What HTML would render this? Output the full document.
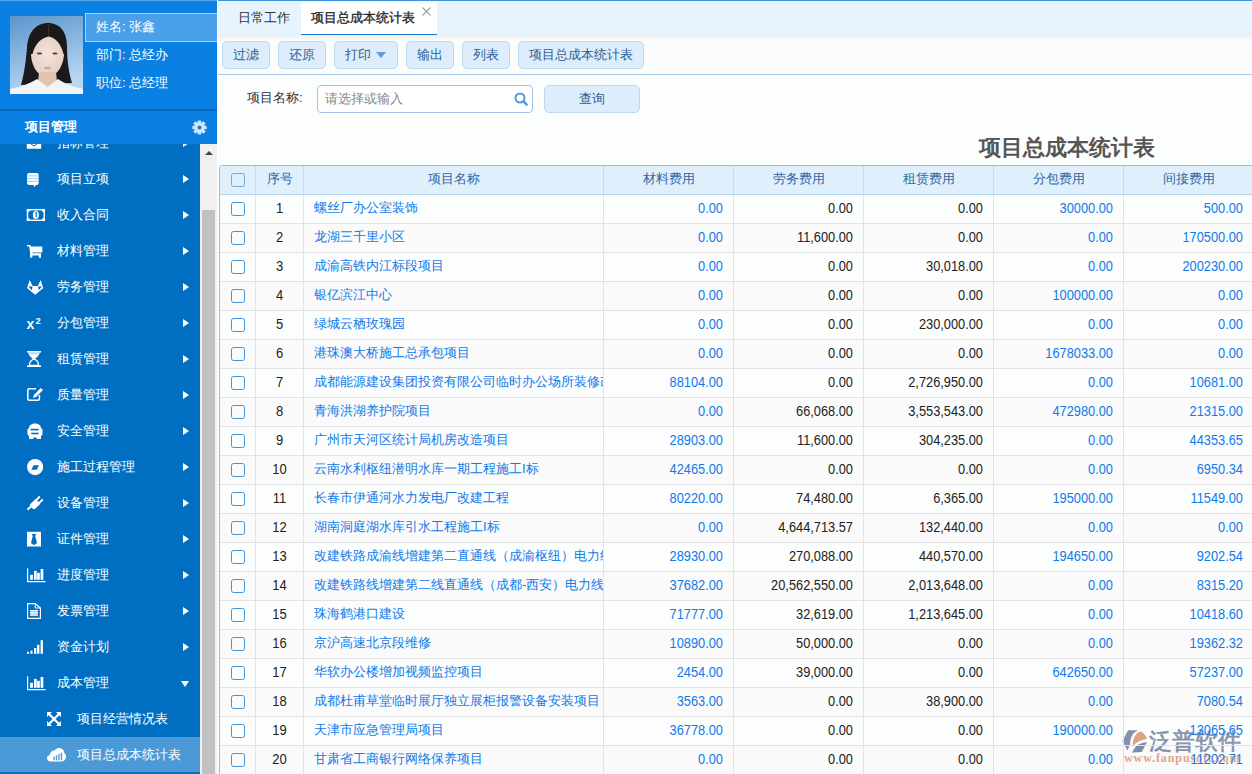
<!DOCTYPE html><html><head><meta charset="utf-8"><style>
*{margin:0;padding:0;box-sizing:border-box}
html,body{width:1252px;height:774px;overflow:hidden;background:#fcfdfd;font-family:"Liberation Sans",sans-serif;font-size:13px;position:relative}
.abs{position:absolute}
#side{position:absolute;left:0;top:0;width:217px;height:774px;background:#006fc2;overflow:hidden}
#shead{position:absolute;left:0;top:0;width:217px;height:110px;background:#0a80e3;border-top:1px solid #55a6ea}
#photo{position:absolute;left:10px;top:16px;width:73px;height:78px}
.info{position:absolute;left:96px;color:#fff;font-size:13px;line-height:20px}
#namebox{position:absolute;left:85px;top:13px;width:134px;height:29px;background:#4aa0e8;border:1px solid #a9d1f5;border-right:none}
#pbar{position:absolute;left:0;top:109px;width:217px;height:35px;background:#0a80e3;border-top:2px solid #0868bb}
#pbar span{position:absolute;left:25px;top:7px;color:#fff;font-weight:bold;font-size:13px}
.mi{position:absolute;left:0;width:200px;height:36px;color:#fff;font-size:13px}
.mi svg{position:absolute;left:25px;top:8px;overflow:visible}
.mi .t{position:absolute;left:57px;top:9.5px;line-height:18px}
.mi .ar{position:absolute;left:183px;top:14.6px;width:0;height:0;border-top:4.5px solid transparent;border-bottom:4.5px solid transparent;border-left:6px solid #fff}
#strack{position:absolute;left:200px;top:144px;width:17px;height:630px;background:#f0f0f0}
#sthumb{position:absolute;left:202px;top:210px;width:13px;height:564px;background:#c1c1c1}
#main{position:absolute;left:217px;top:0;width:1035px;height:774px;background:#fcfdfd;border-left:1px solid #fff}
#tabs{position:absolute;left:218px;top:0;width:1034px;height:35px;background:#e8f4fd;border-top:1px solid #3d94e0}
.tab{position:absolute;top:1px;height:34px;line-height:32px;font-size:13px;color:#333}
#toolbar{position:absolute;left:218px;top:35px;width:1034px;height:40px;background:linear-gradient(#eeeeee 0,#fbfcfc 6px);border-bottom:1px solid #a8cbe8}
.btn{position:absolute;top:41px;height:28px;background:#deedfb;border:1px solid #bfd8ef;border-radius:5px;color:#2d5e92;font-size:13px;text-align:center;line-height:26px}
</style></head><body>

<div id="side">
<div id="shead"></div>
<svg id="photo" width="73" height="78" viewBox="0 0 73 78"><defs><linearGradient id="pg" x1="0" y1="0" x2="0.3" y2="1"><stop offset="0" stop-color="#5a95cc"/><stop offset="1" stop-color="#b8d8f2"/></linearGradient><radialGradient id="fg" cx="0.5" cy="0.45" r="0.6"><stop offset="0" stop-color="#f4e4dc"/><stop offset="1" stop-color="#e6cbbd"/></radialGradient></defs><rect width="73" height="78" fill="url(#pg)"/><path d="M11 69C15 55 16 42 17 32C18 16 26 7 38 7C50 7 57 16 57 30C57 45 59 57 62 67Z" fill="#1b1a1a"/><path d="M21 37C21 27 28 20 38.5 20C48 20 54 27 54 37C54 50 46 61 37.5 61C28 61 21 50 21 37Z" fill="url(#fg)"/><path d="M38.5 12L38.8 20.5C31 22 25 28 22.5 38L20 38C20 25 28 14 38.5 12Z" fill="#1b1a1a"/><path d="M38.5 12L38.8 20.5C46 22 51 28 53.5 38L56 38C56 25 49 14 38.5 12Z" fill="#1b1a1a"/><path d="M38.3 8L38.8 20" stroke="#4a3e38" stroke-width="0.7"/><path d="M29 56L46 56L47 66L37.5 72L28 66Z" fill="#e2c3b4"/><ellipse cx="29.5" cy="37.5" rx="2.6" ry="1.1" fill="#4a3c3c"/><ellipse cx="45" cy="37.5" rx="2.6" ry="1.1" fill="#4a3c3c"/><ellipse cx="37.5" cy="52" rx="3.4" ry="1.3" fill="#dc9aa0"/><path d="M0 78L0 73C8 71 18 69 27 63L37.5 71L48 63C56 69 66 71 73 73L73 78Z" fill="#f2f4f7"/></svg>
<div id="namebox"></div>
<div class="info" style="top:17px">姓名: 张鑫</div>
<div class="info" style="top:45px">部门: 总经办</div>
<div class="info" style="top:73px">职位: 总经理</div>
<div class="mi" style="top:124px"><svg width="21" height="20" viewBox="0 0 21 20"><rect x="1.8" y="3" width="14.4" height="13.8" rx="0.5" fill="#fff"/><path d="M6 12L9 14L12 12" stroke="#006fc2" stroke-width="1" fill="none"/></svg><span class="t">指标管理</span><div class="ar"></div></div>
<div class="mi" style="top:160px"><svg width="21" height="20" viewBox="0 0 21 20"><rect x="2" y="5" width="11.7" height="12" rx="2" fill="#fff"/><path d="M2 7.9h11.7M2 10.6h11.7M2 13.3h11.7" stroke="#006fc2" stroke-opacity="0.45" stroke-width="0.8"/><path d="M8.4 16.5L11.5 16.5L9.2 19.3Z" fill="#fff"/></svg><span class="t">项目立项</span><div class="ar"></div></div>
<div class="mi" style="top:196px"><svg width="21" height="20" viewBox="0 0 21 20"><rect x="1.8" y="5" width="18.1" height="12" fill="#fff"/><rect x="3.2" y="6.4" width="15.3" height="9.2" fill="#006fc2"/><circle cx="3.2" cy="6.4" r="1.6" fill="#fff"/><circle cx="18.5" cy="6.4" r="1.6" fill="#fff"/><circle cx="3.2" cy="15.6" r="1.6" fill="#fff"/><circle cx="18.5" cy="15.6" r="1.6" fill="#fff"/><ellipse cx="10.85" cy="11" rx="3" ry="4.1" fill="#fff"/><path d="M10.2 9.2L11.2 8.6V13.4" stroke="#006fc2" stroke-width="1.1" fill="none"/></svg><span class="t">收入合同</span><div class="ar"></div></div>
<div class="mi" style="top:232px"><svg width="21" height="20" viewBox="0 0 21 20"><path d="M2 5L5.3 5L6 6.5L17.3 6.5L17.3 12.6L7.4 12.6L7.4 13.3L16 13.3L16 17.8L13.8 17.8L13.8 15.4L7.3 15.4L7.3 17.8L5.1 17.8L5.1 13L4.2 6.6L2 6.6Z" fill="#fff"/></svg><span class="t">材料管理</span><div class="ar"></div></div>
<div class="mi" style="top:268px"><svg width="21" height="20" viewBox="0 0 21 20"><path d="M2 12L4.75 3.9L7.6 10L12.9 10L15.6 3.9L18.3 12L10.2 18.7Z" fill="#fff"/><path d="M3.3 10.6L7.4 10.6L6.9 14.2Z" fill="#006fc2"/><path d="M13.1 10.6L17.1 10.6L13.6 14.2Z" fill="#006fc2"/></svg><span class="t">劳务管理</span><div class="ar"></div></div>
<div class="mi" style="top:304px"><svg width="21" height="20" viewBox="0 0 21 20"><text x="1.6" y="17" font-family="Liberation Sans" font-weight="bold" font-size="14" fill="#fff">x</text><text x="10.6" y="11.5" font-family="Liberation Sans" font-weight="bold" font-size="9.5" fill="#fff">2</text></svg><span class="t">分包管理</span><div class="ar"></div></div>
<div class="mi" style="top:340px"><svg width="21" height="20" viewBox="0 0 21 20"><rect x="2" y="3" width="14" height="1.6" fill="#fff"/><rect x="2" y="17.4" width="14" height="1.6" fill="#fff"/><path d="M3.5 4.6L14.5 4.6C14.5 8 11 10 10 11L8 11C7 10 3.5 8 3.5 4.6Z" fill="#fff"/><path d="M5 5.8H13" stroke="#006fc2" stroke-opacity="0.4" stroke-width="0.9"/><path d="M9 11.2C6.5 12 4.4 14.2 4.4 17.4L13.6 17.4C13.6 14.2 11.5 12 9 11.2Z" stroke="#fff" stroke-width="1.3" fill="none"/></svg><span class="t">租赁管理</span><div class="ar"></div></div>
<div class="mi" style="top:376px"><svg width="21" height="20" viewBox="0 0 21 20"><path d="M11 4.8H4Q2.8 4.8 2.8 6V15Q2.8 16.2 4 16.2H13Q14.4 16.2 14.4 15V11" stroke="#fff" stroke-width="1.5" fill="none"/><path d="M8.2 13.9L8.8 10.9L15.8 3.9L18 6.1L11 13.1Z" fill="#fff"/></svg><span class="t">质量管理</span><div class="ar"></div></div>
<div class="mi" style="top:412px"><svg width="21" height="20" viewBox="0 0 21 20"><path d="M4 8C4 5 7 3.4 10 3.4C13 3.4 16 5 16 8C17.5 9 18 10.5 17.4 12C18 13.5 17.5 15 16 16L16 19L12.2 19L11.2 17.4L8.8 17.4L7.8 19L4 19L4 16C2.5 15 2 13.5 2.6 12C2 10.5 2.5 9 4 8Z" fill="#fff"/><rect x="5.5" y="8.8" width="8.2" height="1.6" fill="#006fc2"/><rect x="6.3" y="12.7" width="7.4" height="1.6" fill="#006fc2"/></svg><span class="t">安全管理</span><div class="ar"></div></div>
<div class="mi" style="top:448px"><svg width="21" height="20" viewBox="0 0 21 20"><circle cx="10.1" cy="11.1" r="8.1" fill="#fff"/><path d="M6.3 13.8L8.6 9.2L14 9.2L11.7 13.8Z" fill="#006fc2"/></svg><span class="t">施工过程管理</span><div class="ar"></div></div>
<div class="mi" style="top:484px"><svg width="21" height="20" viewBox="0 0 21 20"><path d="M2.5 17.8L7 13.3" stroke="#fff" stroke-width="2"/><path d="M5.2 12.3L10.5 7L15.3 11.8L10 17.1C8 17.6 4.7 15 5.2 12.3Z" fill="#fff"/><path d="M10.5 9L14.8 4.5M13.3 11.8L17.8 7.5" stroke="#fff" stroke-width="2"/></svg><span class="t">设备管理</span><div class="ar"></div></div>
<div class="mi" style="top:520px"><svg width="21" height="20" viewBox="0 0 21 20"><rect x="2" y="3.8" width="14" height="14.7" fill="#fff"/><path d="M6.7 6L11.3 6L10.2 8L12 15L9 17.2L6 15L7.8 8Z" fill="#006fc2"/></svg><span class="t">证件管理</span><div class="ar"></div></div>
<div class="mi" style="top:556px"><svg width="21" height="20" viewBox="0 0 21 20"><path d="M2.6 4.2V17.6H20.6" fill="none" stroke="#fff" stroke-width="1.2"/><rect x="5.1" y="10.8" width="2.8" height="5" fill="#fff"/><rect x="9" y="6.9" width="2.7" height="8.9" fill="#fff"/><rect x="12.1" y="8.8" width="2.7" height="7" fill="#fff"/><rect x="15.6" y="5" width="2.7" height="10.8" fill="#fff"/></svg><span class="t">进度管理</span><div class="ar"></div></div>
<div class="mi" style="top:592px"><svg width="21" height="20" viewBox="0 0 21 20"><path d="M2.6 3.6H10.2L15.4 8V18.3H2.6Z" fill="none" stroke="#fff" stroke-width="1.2"/><path d="M10.2 3.6V8H15.4" fill="none" stroke="#fff" stroke-width="1"/><rect x="5.1" y="10" width="7.8" height="5.8" fill="#fff"/><path d="M5.1 11.7H12.9M5.1 14H12.9" stroke="#006fc2" stroke-opacity="0.5" stroke-width="0.9"/></svg><span class="t">发票管理</span><div class="ar"></div></div>
<div class="mi" style="top:628px"><svg width="21" height="20" viewBox="0 0 21 20"><rect x="2" y="15.8" width="2" height="2" fill="#fff"/><rect x="5.5" y="14.7" width="2" height="3.1" fill="#fff"/><rect x="9" y="12" width="2.3" height="5.8" fill="#fff"/><rect x="12.1" y="8.8" width="2.3" height="9" fill="#fff"/><rect x="15.6" y="4.2" width="2.3" height="13.6" fill="#fff"/></svg><span class="t">资金计划</span><div class="ar"></div></div>
<div class="mi" style="top:664px"><svg width="21" height="20" viewBox="0 0 21 20"><path d="M2.6 4.2V17.6H20.6" fill="none" stroke="#fff" stroke-width="1.2"/><rect x="5.1" y="10.8" width="2.8" height="5" fill="#fff"/><rect x="9" y="6.9" width="2.7" height="8.9" fill="#fff"/><rect x="12.1" y="8.8" width="2.7" height="7" fill="#fff"/><rect x="15.6" y="5" width="2.7" height="10.8" fill="#fff"/></svg><span class="t">成本管理</span><div class="ar" style="left:181px;top:17px;border-left:4.5px solid transparent;border-right:4.5px solid transparent;border-top:6px solid #fff;border-bottom:none"></div></div>
<div class="mi" style="top:700px"><svg style="left:47px;top:12px" width="14" height="14" viewBox="0 0 14 14"><path d="M0 0h5L0 5zM14 0v5L9 0zM0 14V9l5 5zM14 14H9l5-5z" fill="#fff"/><path d="M2 2l10 10M12 2L2 12" stroke="#fff" stroke-width="2.2"/></svg><span class="t" style="left:77px;top:10px">项目经营情况表</span></div>
<div class="mi" style="top:737px;height:35px;background:#4b9ad7"><svg style="left:47px;top:11px" width="19" height="14" viewBox="0 0 19 14"><path d="M3.5 13.4C1.5 13.4 0 12 0 10.2C0 8.6 1.2 7.3 2.8 7C3 4.5 5 2.6 7.5 2.6C8.5 1 10.2 0 12 0C15 0 17.3 2.3 17.3 5.2C18.4 5.9 19 7 19 8.3V8.7C19 11.3 17 13.4 14.5 13.4Z" fill="#fff"/><rect x="6.3" y="8.5" width="1.4" height="3.8" fill="#4b9ad7"/><rect x="8.8" y="7.3" width="1.4" height="5" fill="#4b9ad7"/><rect x="11.3" y="6" width="1.4" height="6.3" fill="#4b9ad7"/><rect x="13.8" y="4.8" width="1.4" height="7.5" fill="#4b9ad7"/></svg><span class="t" style="left:77px;top:9px">项目总成本统计表</span></div>
<div id="pbar"><span>项目管理</span><svg style="position:absolute;left:192px;top:9px" width="15" height="15" viewBox="0 0 15 15"><path fill="#d3e6f8" d="M14.62 5.91 L14.62 9.09 L12.37 9.33 L12.24 9.65 L13.66 11.41 L11.41 13.66 L9.65 12.24 L9.33 12.37 L9.09 14.62 L5.91 14.62 L5.67 12.37 L5.35 12.24 L3.59 13.66 L1.34 11.41 L2.76 9.65 L2.63 9.33 L0.38 9.09 L0.38 5.91 L2.63 5.67 L2.76 5.35 L1.34 3.59 L3.59 1.34 L5.35 2.76 L5.67 2.63 L5.91 0.38 L9.09 0.38 L9.33 2.63 L9.65 2.76 L11.41 1.34 L13.66 3.59 L12.24 5.35 L12.37 5.67Z"/><circle cx="7.5" cy="7.5" r="4.2" fill="#d3e6f8"/><circle cx="7.5" cy="7.5" r="2" fill="#0a80e3"/></svg></div>
<div id="strack"></div><div id="sthumb"></div>
<div class="abs" style="left:205px;top:151px;width:0;height:0;border-left:4px solid transparent;border-right:4px solid transparent;border-bottom:4px solid #444"></div>
</div>
<div id="main"></div>
<div id="tabs"><div class="tab" style="left:20px">日常工作</div><div class="tab" style="left:83px;width:136px;background:#fff;border-bottom:2px solid #1a75c9;padding-left:10px;color:#2a2a2a;-webkit-text-stroke:0.35px #2a2a2a">项目总成本统计表</div><svg class="abs" style="left:204px;top:6px" width="9" height="9" viewBox="0 0 9 9"><path d="M0.5 0.5L8.5 8.5M8.5 0.5L0.5 8.5" stroke="#a0a0a0" stroke-width="1.1"/></svg></div>
<div id="toolbar"></div>
<div class="btn" style="left:222px;width:48px">过滤</div>
<div class="btn" style="left:278px;width:48px">还原</div>
<div class="btn" style="left:334px;width:64px;text-align:left;padding-left:10px">打印 <span style="display:inline-block;width:0;height:0;border-left:5px solid transparent;border-right:5px solid transparent;border-top:6px solid #5f9ed8;vertical-align:middle;margin-left:1px;position:relative;top:-1px"></span></div>
<div class="btn" style="left:406px;width:48px">输出</div>
<div class="btn" style="left:462px;width:48px">列表</div>
<div class="btn" style="left:518px;width:126px">项目总成本统计表</div>
<div class="abs" style="left:247px;top:89px;color:#333;font-size:13px;line-height:18px">项目名称:</div>
<div class="abs" style="left:317px;top:85px;width:216px;height:28px;background:#fff;border:1px solid #9fc4e6;border-radius:4px"><span style="position:absolute;left:7px;top:4px;color:#888;line-height:18px">请选择或输入</span><svg style="position:absolute;left:196px;top:6px" width="14" height="14" viewBox="0 0 14 14"><circle cx="6" cy="6" r="4.5" fill="none" stroke="#4c9be0" stroke-width="2"/><path d="M9.2 9.2l3.5 3.5" stroke="#4c9be0" stroke-width="2.4" stroke-linecap="round"/></svg></div>
<div class="btn" style="left:544px;top:85px;width:96px;height:28px;line-height:26px">查询</div>
<div class="abs" style="left:979px;top:135px;font-size:22px;font-weight:bold;color:#555;line-height:26px">项目总成本统计表</div>
<svg class="abs" style="left:1118px;top:724px" width="34" height="34" viewBox="0 0 34 34"><path d="M4.4 17.1L10.1 6.2L19.8 6.2C16 8 13.3 11.5 12.6 15.5L11.9 21L9.4 26.4Z" fill="#7f8ba8" fill-opacity="0.95"/><path d="M14.9 22C14.6 17 15.6 13 18.5 10C20 8.5 21.5 7.6 23.3 7.5C26 9.5 28 12 29 14.9C25 15.3 21 16.7 17.5 19.5Z" fill="#e0a184"/><path d="M14 28.6L17.6 22.8C19.5 20.6 22.5 19 29 18L23.7 28.1Z" fill="#7f8ba8"/></svg>
<div class="abs" style="left:1149px;top:725px;font-size:23px;line-height:32px;color:#8792ab;-webkit-text-stroke:0.6px #8792ab;white-space:nowrap">泛普软件</div>
<div class="abs" style="left:1124px;top:751px;font-family:Liberation Serif,serif;font-size:12px;font-weight:bold;letter-spacing:0.9px;line-height:14px;color:#e3a88a;white-space:nowrap">www.fanpusoft.com</div>
<div class="abs" style="left:219px;top:165px;width:1040px;height:620px;border:1px solid #8fbfe6;border-radius:3px 0 0 0;overflow:hidden">
<div class="abs" style="left:0;top:0;width:1040px;height:29px;background:#e0effc;border-bottom:1px solid #b7d4ee"></div>
<div class="abs" style="left:35px;top:0;width:1px;height:29px;background:#c3dcf2"></div>
<div class="abs" style="left:35.6px;top:-0.8px;width:48px;height:28px;line-height:28px;text-align:center;color:#2f68a3">序号</div>
<div class="abs" style="left:83px;top:0;width:1px;height:29px;background:#c3dcf2"></div>
<div class="abs" style="left:83.6px;top:-0.8px;width:300px;height:28px;line-height:28px;text-align:center;color:#2f68a3">项目名称</div>
<div class="abs" style="left:383px;top:0;width:1px;height:29px;background:#c3dcf2"></div>
<div class="abs" style="left:383.6px;top:-0.8px;width:130px;height:28px;line-height:28px;text-align:center;color:#2f68a3">材料费用</div>
<div class="abs" style="left:513px;top:0;width:1px;height:29px;background:#c3dcf2"></div>
<div class="abs" style="left:513.6px;top:-0.8px;width:130px;height:28px;line-height:28px;text-align:center;color:#2f68a3">劳务费用</div>
<div class="abs" style="left:643px;top:0;width:1px;height:29px;background:#c3dcf2"></div>
<div class="abs" style="left:643.6px;top:-0.8px;width:130px;height:28px;line-height:28px;text-align:center;color:#2f68a3">租赁费用</div>
<div class="abs" style="left:773px;top:0;width:1px;height:29px;background:#c3dcf2"></div>
<div class="abs" style="left:773.6px;top:-0.8px;width:130px;height:28px;line-height:28px;text-align:center;color:#2f68a3">分包费用</div>
<div class="abs" style="left:903px;top:0;width:1px;height:29px;background:#c3dcf2"></div>
<div class="abs" style="left:903.6px;top:-0.8px;width:131px;height:28px;line-height:28px;text-align:center;color:#2f68a3">间接费用</div>
<div class="abs" style="left:11px;top:7px;width:14px;height:14px;border:1.5px solid #70a9d7;border-radius:2.5px"></div>
<div class="abs" style="left:0;top:57px;width:1040px;height:1px;background:#e3e3e3"></div>
<div class="abs" style="left:11px;top:36px;width:14px;height:14px;border:1.5px solid #3f94dc;border-radius:2.5px"></div>
<div class="abs" style="left:35.6px;top:29px;width:48px;height:28px;line-height:28px;text-align:center;color:#222;transform:scaleY(1.08)">1</div>
<div class="abs" style="left:94px;top:28.4px;width:290px;height:28px;line-height:28px;white-space:nowrap;overflow:hidden;color:#0f7aea">螺丝厂办公室装饰</div>
<div class="abs" style="left:382.6px;top:29px;width:120px;height:28px;line-height:28px;text-align:right;color:#0f7aea;transform:scale(0.985,1.08);transform-origin:119.5px 50%">0.00</div>
<div class="abs" style="left:512.6px;top:29px;width:120px;height:28px;line-height:28px;text-align:right;color:#222;transform:scale(0.985,1.08);transform-origin:119.5px 50%">0.00</div>
<div class="abs" style="left:642.6px;top:29px;width:120px;height:28px;line-height:28px;text-align:right;color:#222;transform:scale(0.985,1.08);transform-origin:119.5px 50%">0.00</div>
<div class="abs" style="left:772.6px;top:29px;width:120px;height:28px;line-height:28px;text-align:right;color:#0f7aea;transform:scale(0.985,1.08);transform-origin:119.5px 50%">30000.00</div>
<div class="abs" style="left:902.6px;top:29px;width:120px;height:28px;line-height:28px;text-align:right;color:#0f7aea;transform:scale(0.985,1.08);transform-origin:119.5px 50%">500.00</div>
<div class="abs" style="left:0;top:58px;width:1040px;height:28px;background:rgba(60,40,40,0.012)"></div>
<div class="abs" style="left:0;top:86px;width:1040px;height:1px;background:#e3e3e3"></div>
<div class="abs" style="left:11px;top:65px;width:14px;height:14px;border:1.5px solid #3f94dc;border-radius:2.5px"></div>
<div class="abs" style="left:35.6px;top:58px;width:48px;height:28px;line-height:28px;text-align:center;color:#222;transform:scaleY(1.08)">2</div>
<div class="abs" style="left:94px;top:57.4px;width:290px;height:28px;line-height:28px;white-space:nowrap;overflow:hidden;color:#0f7aea">龙湖三千里小区</div>
<div class="abs" style="left:382.6px;top:58px;width:120px;height:28px;line-height:28px;text-align:right;color:#0f7aea;transform:scale(0.985,1.08);transform-origin:119.5px 50%">0.00</div>
<div class="abs" style="left:512.6px;top:58px;width:120px;height:28px;line-height:28px;text-align:right;color:#222;transform:scale(0.985,1.08);transform-origin:119.5px 50%">11,600.00</div>
<div class="abs" style="left:642.6px;top:58px;width:120px;height:28px;line-height:28px;text-align:right;color:#222;transform:scale(0.985,1.08);transform-origin:119.5px 50%">0.00</div>
<div class="abs" style="left:772.6px;top:58px;width:120px;height:28px;line-height:28px;text-align:right;color:#0f7aea;transform:scale(0.985,1.08);transform-origin:119.5px 50%">0.00</div>
<div class="abs" style="left:902.6px;top:58px;width:120px;height:28px;line-height:28px;text-align:right;color:#0f7aea;transform:scale(0.985,1.08);transform-origin:119.5px 50%">170500.00</div>
<div class="abs" style="left:0;top:115px;width:1040px;height:1px;background:#e3e3e3"></div>
<div class="abs" style="left:11px;top:94px;width:14px;height:14px;border:1.5px solid #3f94dc;border-radius:2.5px"></div>
<div class="abs" style="left:35.6px;top:87px;width:48px;height:28px;line-height:28px;text-align:center;color:#222;transform:scaleY(1.08)">3</div>
<div class="abs" style="left:94px;top:86.4px;width:290px;height:28px;line-height:28px;white-space:nowrap;overflow:hidden;color:#0f7aea">成渝高铁内江标段项目</div>
<div class="abs" style="left:382.6px;top:87px;width:120px;height:28px;line-height:28px;text-align:right;color:#0f7aea;transform:scale(0.985,1.08);transform-origin:119.5px 50%">0.00</div>
<div class="abs" style="left:512.6px;top:87px;width:120px;height:28px;line-height:28px;text-align:right;color:#222;transform:scale(0.985,1.08);transform-origin:119.5px 50%">0.00</div>
<div class="abs" style="left:642.6px;top:87px;width:120px;height:28px;line-height:28px;text-align:right;color:#222;transform:scale(0.985,1.08);transform-origin:119.5px 50%">30,018.00</div>
<div class="abs" style="left:772.6px;top:87px;width:120px;height:28px;line-height:28px;text-align:right;color:#0f7aea;transform:scale(0.985,1.08);transform-origin:119.5px 50%">0.00</div>
<div class="abs" style="left:902.6px;top:87px;width:120px;height:28px;line-height:28px;text-align:right;color:#0f7aea;transform:scale(0.985,1.08);transform-origin:119.5px 50%">200230.00</div>
<div class="abs" style="left:0;top:116px;width:1040px;height:28px;background:rgba(60,40,40,0.012)"></div>
<div class="abs" style="left:0;top:144px;width:1040px;height:1px;background:#e3e3e3"></div>
<div class="abs" style="left:11px;top:123px;width:14px;height:14px;border:1.5px solid #3f94dc;border-radius:2.5px"></div>
<div class="abs" style="left:35.6px;top:116px;width:48px;height:28px;line-height:28px;text-align:center;color:#222;transform:scaleY(1.08)">4</div>
<div class="abs" style="left:94px;top:115.4px;width:290px;height:28px;line-height:28px;white-space:nowrap;overflow:hidden;color:#0f7aea">银亿滨江中心</div>
<div class="abs" style="left:382.6px;top:116px;width:120px;height:28px;line-height:28px;text-align:right;color:#0f7aea;transform:scale(0.985,1.08);transform-origin:119.5px 50%">0.00</div>
<div class="abs" style="left:512.6px;top:116px;width:120px;height:28px;line-height:28px;text-align:right;color:#222;transform:scale(0.985,1.08);transform-origin:119.5px 50%">0.00</div>
<div class="abs" style="left:642.6px;top:116px;width:120px;height:28px;line-height:28px;text-align:right;color:#222;transform:scale(0.985,1.08);transform-origin:119.5px 50%">0.00</div>
<div class="abs" style="left:772.6px;top:116px;width:120px;height:28px;line-height:28px;text-align:right;color:#0f7aea;transform:scale(0.985,1.08);transform-origin:119.5px 50%">100000.00</div>
<div class="abs" style="left:902.6px;top:116px;width:120px;height:28px;line-height:28px;text-align:right;color:#0f7aea;transform:scale(0.985,1.08);transform-origin:119.5px 50%">0.00</div>
<div class="abs" style="left:0;top:173px;width:1040px;height:1px;background:#e3e3e3"></div>
<div class="abs" style="left:11px;top:152px;width:14px;height:14px;border:1.5px solid #3f94dc;border-radius:2.5px"></div>
<div class="abs" style="left:35.6px;top:145px;width:48px;height:28px;line-height:28px;text-align:center;color:#222;transform:scaleY(1.08)">5</div>
<div class="abs" style="left:94px;top:144.4px;width:290px;height:28px;line-height:28px;white-space:nowrap;overflow:hidden;color:#0f7aea">绿城云栖玫瑰园</div>
<div class="abs" style="left:382.6px;top:145px;width:120px;height:28px;line-height:28px;text-align:right;color:#0f7aea;transform:scale(0.985,1.08);transform-origin:119.5px 50%">0.00</div>
<div class="abs" style="left:512.6px;top:145px;width:120px;height:28px;line-height:28px;text-align:right;color:#222;transform:scale(0.985,1.08);transform-origin:119.5px 50%">0.00</div>
<div class="abs" style="left:642.6px;top:145px;width:120px;height:28px;line-height:28px;text-align:right;color:#222;transform:scale(0.985,1.08);transform-origin:119.5px 50%">230,000.00</div>
<div class="abs" style="left:772.6px;top:145px;width:120px;height:28px;line-height:28px;text-align:right;color:#0f7aea;transform:scale(0.985,1.08);transform-origin:119.5px 50%">0.00</div>
<div class="abs" style="left:902.6px;top:145px;width:120px;height:28px;line-height:28px;text-align:right;color:#0f7aea;transform:scale(0.985,1.08);transform-origin:119.5px 50%">0.00</div>
<div class="abs" style="left:0;top:174px;width:1040px;height:28px;background:rgba(60,40,40,0.012)"></div>
<div class="abs" style="left:0;top:202px;width:1040px;height:1px;background:#e3e3e3"></div>
<div class="abs" style="left:11px;top:181px;width:14px;height:14px;border:1.5px solid #3f94dc;border-radius:2.5px"></div>
<div class="abs" style="left:35.6px;top:174px;width:48px;height:28px;line-height:28px;text-align:center;color:#222;transform:scaleY(1.08)">6</div>
<div class="abs" style="left:94px;top:173.4px;width:290px;height:28px;line-height:28px;white-space:nowrap;overflow:hidden;color:#0f7aea">港珠澳大桥施工总承包项目</div>
<div class="abs" style="left:382.6px;top:174px;width:120px;height:28px;line-height:28px;text-align:right;color:#0f7aea;transform:scale(0.985,1.08);transform-origin:119.5px 50%">0.00</div>
<div class="abs" style="left:512.6px;top:174px;width:120px;height:28px;line-height:28px;text-align:right;color:#222;transform:scale(0.985,1.08);transform-origin:119.5px 50%">0.00</div>
<div class="abs" style="left:642.6px;top:174px;width:120px;height:28px;line-height:28px;text-align:right;color:#222;transform:scale(0.985,1.08);transform-origin:119.5px 50%">0.00</div>
<div class="abs" style="left:772.6px;top:174px;width:120px;height:28px;line-height:28px;text-align:right;color:#0f7aea;transform:scale(0.985,1.08);transform-origin:119.5px 50%">1678033.00</div>
<div class="abs" style="left:902.6px;top:174px;width:120px;height:28px;line-height:28px;text-align:right;color:#0f7aea;transform:scale(0.985,1.08);transform-origin:119.5px 50%">0.00</div>
<div class="abs" style="left:0;top:231px;width:1040px;height:1px;background:#e3e3e3"></div>
<div class="abs" style="left:11px;top:210px;width:14px;height:14px;border:1.5px solid #3f94dc;border-radius:2.5px"></div>
<div class="abs" style="left:35.6px;top:203px;width:48px;height:28px;line-height:28px;text-align:center;color:#222;transform:scaleY(1.08)">7</div>
<div class="abs" style="left:94px;top:202.4px;width:290px;height:28px;line-height:28px;white-space:nowrap;overflow:hidden;color:#0f7aea">成都能源建设集团投资有限公司临时办公场所装修改造项目</div>
<div class="abs" style="left:382.6px;top:203px;width:120px;height:28px;line-height:28px;text-align:right;color:#0f7aea;transform:scale(0.985,1.08);transform-origin:119.5px 50%">88104.00</div>
<div class="abs" style="left:512.6px;top:203px;width:120px;height:28px;line-height:28px;text-align:right;color:#222;transform:scale(0.985,1.08);transform-origin:119.5px 50%">0.00</div>
<div class="abs" style="left:642.6px;top:203px;width:120px;height:28px;line-height:28px;text-align:right;color:#222;transform:scale(0.985,1.08);transform-origin:119.5px 50%">2,726,950.00</div>
<div class="abs" style="left:772.6px;top:203px;width:120px;height:28px;line-height:28px;text-align:right;color:#0f7aea;transform:scale(0.985,1.08);transform-origin:119.5px 50%">0.00</div>
<div class="abs" style="left:902.6px;top:203px;width:120px;height:28px;line-height:28px;text-align:right;color:#0f7aea;transform:scale(0.985,1.08);transform-origin:119.5px 50%">10681.00</div>
<div class="abs" style="left:0;top:232px;width:1040px;height:28px;background:rgba(60,40,40,0.012)"></div>
<div class="abs" style="left:0;top:260px;width:1040px;height:1px;background:#e3e3e3"></div>
<div class="abs" style="left:11px;top:239px;width:14px;height:14px;border:1.5px solid #3f94dc;border-radius:2.5px"></div>
<div class="abs" style="left:35.6px;top:232px;width:48px;height:28px;line-height:28px;text-align:center;color:#222;transform:scaleY(1.08)">8</div>
<div class="abs" style="left:94px;top:231.4px;width:290px;height:28px;line-height:28px;white-space:nowrap;overflow:hidden;color:#0f7aea">青海洪湖养护院项目</div>
<div class="abs" style="left:382.6px;top:232px;width:120px;height:28px;line-height:28px;text-align:right;color:#0f7aea;transform:scale(0.985,1.08);transform-origin:119.5px 50%">0.00</div>
<div class="abs" style="left:512.6px;top:232px;width:120px;height:28px;line-height:28px;text-align:right;color:#222;transform:scale(0.985,1.08);transform-origin:119.5px 50%">66,068.00</div>
<div class="abs" style="left:642.6px;top:232px;width:120px;height:28px;line-height:28px;text-align:right;color:#222;transform:scale(0.985,1.08);transform-origin:119.5px 50%">3,553,543.00</div>
<div class="abs" style="left:772.6px;top:232px;width:120px;height:28px;line-height:28px;text-align:right;color:#0f7aea;transform:scale(0.985,1.08);transform-origin:119.5px 50%">472980.00</div>
<div class="abs" style="left:902.6px;top:232px;width:120px;height:28px;line-height:28px;text-align:right;color:#0f7aea;transform:scale(0.985,1.08);transform-origin:119.5px 50%">21315.00</div>
<div class="abs" style="left:0;top:289px;width:1040px;height:1px;background:#e3e3e3"></div>
<div class="abs" style="left:11px;top:268px;width:14px;height:14px;border:1.5px solid #3f94dc;border-radius:2.5px"></div>
<div class="abs" style="left:35.6px;top:261px;width:48px;height:28px;line-height:28px;text-align:center;color:#222;transform:scaleY(1.08)">9</div>
<div class="abs" style="left:94px;top:260.4px;width:290px;height:28px;line-height:28px;white-space:nowrap;overflow:hidden;color:#0f7aea">广州市天河区统计局机房改造项目</div>
<div class="abs" style="left:382.6px;top:261px;width:120px;height:28px;line-height:28px;text-align:right;color:#0f7aea;transform:scale(0.985,1.08);transform-origin:119.5px 50%">28903.00</div>
<div class="abs" style="left:512.6px;top:261px;width:120px;height:28px;line-height:28px;text-align:right;color:#222;transform:scale(0.985,1.08);transform-origin:119.5px 50%">11,600.00</div>
<div class="abs" style="left:642.6px;top:261px;width:120px;height:28px;line-height:28px;text-align:right;color:#222;transform:scale(0.985,1.08);transform-origin:119.5px 50%">304,235.00</div>
<div class="abs" style="left:772.6px;top:261px;width:120px;height:28px;line-height:28px;text-align:right;color:#0f7aea;transform:scale(0.985,1.08);transform-origin:119.5px 50%">0.00</div>
<div class="abs" style="left:902.6px;top:261px;width:120px;height:28px;line-height:28px;text-align:right;color:#0f7aea;transform:scale(0.985,1.08);transform-origin:119.5px 50%">44353.65</div>
<div class="abs" style="left:0;top:290px;width:1040px;height:28px;background:rgba(60,40,40,0.012)"></div>
<div class="abs" style="left:0;top:318px;width:1040px;height:1px;background:#e3e3e3"></div>
<div class="abs" style="left:11px;top:297px;width:14px;height:14px;border:1.5px solid #3f94dc;border-radius:2.5px"></div>
<div class="abs" style="left:35.6px;top:290px;width:48px;height:28px;line-height:28px;text-align:center;color:#222;transform:scaleY(1.08)">10</div>
<div class="abs" style="left:94px;top:289.4px;width:290px;height:28px;line-height:28px;white-space:nowrap;overflow:hidden;color:#0f7aea">云南水利枢纽潜明水库一期工程施工I标</div>
<div class="abs" style="left:382.6px;top:290px;width:120px;height:28px;line-height:28px;text-align:right;color:#0f7aea;transform:scale(0.985,1.08);transform-origin:119.5px 50%">42465.00</div>
<div class="abs" style="left:512.6px;top:290px;width:120px;height:28px;line-height:28px;text-align:right;color:#222;transform:scale(0.985,1.08);transform-origin:119.5px 50%">0.00</div>
<div class="abs" style="left:642.6px;top:290px;width:120px;height:28px;line-height:28px;text-align:right;color:#222;transform:scale(0.985,1.08);transform-origin:119.5px 50%">0.00</div>
<div class="abs" style="left:772.6px;top:290px;width:120px;height:28px;line-height:28px;text-align:right;color:#0f7aea;transform:scale(0.985,1.08);transform-origin:119.5px 50%">0.00</div>
<div class="abs" style="left:902.6px;top:290px;width:120px;height:28px;line-height:28px;text-align:right;color:#0f7aea;transform:scale(0.985,1.08);transform-origin:119.5px 50%">6950.34</div>
<div class="abs" style="left:0;top:347px;width:1040px;height:1px;background:#e3e3e3"></div>
<div class="abs" style="left:11px;top:326px;width:14px;height:14px;border:1.5px solid #3f94dc;border-radius:2.5px"></div>
<div class="abs" style="left:35.6px;top:319px;width:48px;height:28px;line-height:28px;text-align:center;color:#222;transform:scaleY(1.08)">11</div>
<div class="abs" style="left:94px;top:318.4px;width:290px;height:28px;line-height:28px;white-space:nowrap;overflow:hidden;color:#0f7aea">长春市伊通河水力发电厂改建工程</div>
<div class="abs" style="left:382.6px;top:319px;width:120px;height:28px;line-height:28px;text-align:right;color:#0f7aea;transform:scale(0.985,1.08);transform-origin:119.5px 50%">80220.00</div>
<div class="abs" style="left:512.6px;top:319px;width:120px;height:28px;line-height:28px;text-align:right;color:#222;transform:scale(0.985,1.08);transform-origin:119.5px 50%">74,480.00</div>
<div class="abs" style="left:642.6px;top:319px;width:120px;height:28px;line-height:28px;text-align:right;color:#222;transform:scale(0.985,1.08);transform-origin:119.5px 50%">6,365.00</div>
<div class="abs" style="left:772.6px;top:319px;width:120px;height:28px;line-height:28px;text-align:right;color:#0f7aea;transform:scale(0.985,1.08);transform-origin:119.5px 50%">195000.00</div>
<div class="abs" style="left:902.6px;top:319px;width:120px;height:28px;line-height:28px;text-align:right;color:#0f7aea;transform:scale(0.985,1.08);transform-origin:119.5px 50%">11549.00</div>
<div class="abs" style="left:0;top:348px;width:1040px;height:28px;background:rgba(60,40,40,0.012)"></div>
<div class="abs" style="left:0;top:376px;width:1040px;height:1px;background:#e3e3e3"></div>
<div class="abs" style="left:11px;top:355px;width:14px;height:14px;border:1.5px solid #3f94dc;border-radius:2.5px"></div>
<div class="abs" style="left:35.6px;top:348px;width:48px;height:28px;line-height:28px;text-align:center;color:#222;transform:scaleY(1.08)">12</div>
<div class="abs" style="left:94px;top:347.4px;width:290px;height:28px;line-height:28px;white-space:nowrap;overflow:hidden;color:#0f7aea">湖南洞庭湖水库引水工程施工I标</div>
<div class="abs" style="left:382.6px;top:348px;width:120px;height:28px;line-height:28px;text-align:right;color:#0f7aea;transform:scale(0.985,1.08);transform-origin:119.5px 50%">0.00</div>
<div class="abs" style="left:512.6px;top:348px;width:120px;height:28px;line-height:28px;text-align:right;color:#222;transform:scale(0.985,1.08);transform-origin:119.5px 50%">4,644,713.57</div>
<div class="abs" style="left:642.6px;top:348px;width:120px;height:28px;line-height:28px;text-align:right;color:#222;transform:scale(0.985,1.08);transform-origin:119.5px 50%">132,440.00</div>
<div class="abs" style="left:772.6px;top:348px;width:120px;height:28px;line-height:28px;text-align:right;color:#0f7aea;transform:scale(0.985,1.08);transform-origin:119.5px 50%">0.00</div>
<div class="abs" style="left:902.6px;top:348px;width:120px;height:28px;line-height:28px;text-align:right;color:#0f7aea;transform:scale(0.985,1.08);transform-origin:119.5px 50%">0.00</div>
<div class="abs" style="left:0;top:405px;width:1040px;height:1px;background:#e3e3e3"></div>
<div class="abs" style="left:11px;top:384px;width:14px;height:14px;border:1.5px solid #3f94dc;border-radius:2.5px"></div>
<div class="abs" style="left:35.6px;top:377px;width:48px;height:28px;line-height:28px;text-align:center;color:#222;transform:scaleY(1.08)">13</div>
<div class="abs" style="left:94px;top:376.4px;width:290px;height:28px;line-height:28px;white-space:nowrap;overflow:hidden;color:#0f7aea">改建铁路成渝线增建第二直通线（成渝枢纽）电力线迁改工程</div>
<div class="abs" style="left:382.6px;top:377px;width:120px;height:28px;line-height:28px;text-align:right;color:#0f7aea;transform:scale(0.985,1.08);transform-origin:119.5px 50%">28930.00</div>
<div class="abs" style="left:512.6px;top:377px;width:120px;height:28px;line-height:28px;text-align:right;color:#222;transform:scale(0.985,1.08);transform-origin:119.5px 50%">270,088.00</div>
<div class="abs" style="left:642.6px;top:377px;width:120px;height:28px;line-height:28px;text-align:right;color:#222;transform:scale(0.985,1.08);transform-origin:119.5px 50%">440,570.00</div>
<div class="abs" style="left:772.6px;top:377px;width:120px;height:28px;line-height:28px;text-align:right;color:#0f7aea;transform:scale(0.985,1.08);transform-origin:119.5px 50%">194650.00</div>
<div class="abs" style="left:902.6px;top:377px;width:120px;height:28px;line-height:28px;text-align:right;color:#0f7aea;transform:scale(0.985,1.08);transform-origin:119.5px 50%">9202.54</div>
<div class="abs" style="left:0;top:406px;width:1040px;height:28px;background:rgba(60,40,40,0.012)"></div>
<div class="abs" style="left:0;top:434px;width:1040px;height:1px;background:#e3e3e3"></div>
<div class="abs" style="left:11px;top:413px;width:14px;height:14px;border:1.5px solid #3f94dc;border-radius:2.5px"></div>
<div class="abs" style="left:35.6px;top:406px;width:48px;height:28px;line-height:28px;text-align:center;color:#222;transform:scaleY(1.08)">14</div>
<div class="abs" style="left:94px;top:405.4px;width:290px;height:28px;line-height:28px;white-space:nowrap;overflow:hidden;color:#0f7aea">改建铁路线增建第二线直通线（成都-西安）电力线迁改</div>
<div class="abs" style="left:382.6px;top:406px;width:120px;height:28px;line-height:28px;text-align:right;color:#0f7aea;transform:scale(0.985,1.08);transform-origin:119.5px 50%">37682.00</div>
<div class="abs" style="left:512.6px;top:406px;width:120px;height:28px;line-height:28px;text-align:right;color:#222;transform:scale(0.985,1.08);transform-origin:119.5px 50%">20,562,550.00</div>
<div class="abs" style="left:642.6px;top:406px;width:120px;height:28px;line-height:28px;text-align:right;color:#222;transform:scale(0.985,1.08);transform-origin:119.5px 50%">2,013,648.00</div>
<div class="abs" style="left:772.6px;top:406px;width:120px;height:28px;line-height:28px;text-align:right;color:#0f7aea;transform:scale(0.985,1.08);transform-origin:119.5px 50%">0.00</div>
<div class="abs" style="left:902.6px;top:406px;width:120px;height:28px;line-height:28px;text-align:right;color:#0f7aea;transform:scale(0.985,1.08);transform-origin:119.5px 50%">8315.20</div>
<div class="abs" style="left:0;top:463px;width:1040px;height:1px;background:#e3e3e3"></div>
<div class="abs" style="left:11px;top:442px;width:14px;height:14px;border:1.5px solid #3f94dc;border-radius:2.5px"></div>
<div class="abs" style="left:35.6px;top:435px;width:48px;height:28px;line-height:28px;text-align:center;color:#222;transform:scaleY(1.08)">15</div>
<div class="abs" style="left:94px;top:434.4px;width:290px;height:28px;line-height:28px;white-space:nowrap;overflow:hidden;color:#0f7aea">珠海鹤港口建设</div>
<div class="abs" style="left:382.6px;top:435px;width:120px;height:28px;line-height:28px;text-align:right;color:#0f7aea;transform:scale(0.985,1.08);transform-origin:119.5px 50%">71777.00</div>
<div class="abs" style="left:512.6px;top:435px;width:120px;height:28px;line-height:28px;text-align:right;color:#222;transform:scale(0.985,1.08);transform-origin:119.5px 50%">32,619.00</div>
<div class="abs" style="left:642.6px;top:435px;width:120px;height:28px;line-height:28px;text-align:right;color:#222;transform:scale(0.985,1.08);transform-origin:119.5px 50%">1,213,645.00</div>
<div class="abs" style="left:772.6px;top:435px;width:120px;height:28px;line-height:28px;text-align:right;color:#0f7aea;transform:scale(0.985,1.08);transform-origin:119.5px 50%">0.00</div>
<div class="abs" style="left:902.6px;top:435px;width:120px;height:28px;line-height:28px;text-align:right;color:#0f7aea;transform:scale(0.985,1.08);transform-origin:119.5px 50%">10418.60</div>
<div class="abs" style="left:0;top:464px;width:1040px;height:28px;background:rgba(60,40,40,0.012)"></div>
<div class="abs" style="left:0;top:492px;width:1040px;height:1px;background:#e3e3e3"></div>
<div class="abs" style="left:11px;top:471px;width:14px;height:14px;border:1.5px solid #3f94dc;border-radius:2.5px"></div>
<div class="abs" style="left:35.6px;top:464px;width:48px;height:28px;line-height:28px;text-align:center;color:#222;transform:scaleY(1.08)">16</div>
<div class="abs" style="left:94px;top:463.4px;width:290px;height:28px;line-height:28px;white-space:nowrap;overflow:hidden;color:#0f7aea">京沪高速北京段维修</div>
<div class="abs" style="left:382.6px;top:464px;width:120px;height:28px;line-height:28px;text-align:right;color:#0f7aea;transform:scale(0.985,1.08);transform-origin:119.5px 50%">10890.00</div>
<div class="abs" style="left:512.6px;top:464px;width:120px;height:28px;line-height:28px;text-align:right;color:#222;transform:scale(0.985,1.08);transform-origin:119.5px 50%">50,000.00</div>
<div class="abs" style="left:642.6px;top:464px;width:120px;height:28px;line-height:28px;text-align:right;color:#222;transform:scale(0.985,1.08);transform-origin:119.5px 50%">0.00</div>
<div class="abs" style="left:772.6px;top:464px;width:120px;height:28px;line-height:28px;text-align:right;color:#0f7aea;transform:scale(0.985,1.08);transform-origin:119.5px 50%">0.00</div>
<div class="abs" style="left:902.6px;top:464px;width:120px;height:28px;line-height:28px;text-align:right;color:#0f7aea;transform:scale(0.985,1.08);transform-origin:119.5px 50%">19362.32</div>
<div class="abs" style="left:0;top:521px;width:1040px;height:1px;background:#e3e3e3"></div>
<div class="abs" style="left:11px;top:500px;width:14px;height:14px;border:1.5px solid #3f94dc;border-radius:2.5px"></div>
<div class="abs" style="left:35.6px;top:493px;width:48px;height:28px;line-height:28px;text-align:center;color:#222;transform:scaleY(1.08)">17</div>
<div class="abs" style="left:94px;top:492.4px;width:290px;height:28px;line-height:28px;white-space:nowrap;overflow:hidden;color:#0f7aea">华软办公楼增加视频监控项目</div>
<div class="abs" style="left:382.6px;top:493px;width:120px;height:28px;line-height:28px;text-align:right;color:#0f7aea;transform:scale(0.985,1.08);transform-origin:119.5px 50%">2454.00</div>
<div class="abs" style="left:512.6px;top:493px;width:120px;height:28px;line-height:28px;text-align:right;color:#222;transform:scale(0.985,1.08);transform-origin:119.5px 50%">39,000.00</div>
<div class="abs" style="left:642.6px;top:493px;width:120px;height:28px;line-height:28px;text-align:right;color:#222;transform:scale(0.985,1.08);transform-origin:119.5px 50%">0.00</div>
<div class="abs" style="left:772.6px;top:493px;width:120px;height:28px;line-height:28px;text-align:right;color:#0f7aea;transform:scale(0.985,1.08);transform-origin:119.5px 50%">642650.00</div>
<div class="abs" style="left:902.6px;top:493px;width:120px;height:28px;line-height:28px;text-align:right;color:#0f7aea;transform:scale(0.985,1.08);transform-origin:119.5px 50%">57237.00</div>
<div class="abs" style="left:0;top:522px;width:1040px;height:28px;background:rgba(60,40,40,0.012)"></div>
<div class="abs" style="left:0;top:550px;width:1040px;height:1px;background:#e3e3e3"></div>
<div class="abs" style="left:11px;top:529px;width:14px;height:14px;border:1.5px solid #3f94dc;border-radius:2.5px"></div>
<div class="abs" style="left:35.6px;top:522px;width:48px;height:28px;line-height:28px;text-align:center;color:#222;transform:scaleY(1.08)">18</div>
<div class="abs" style="left:94px;top:521.4px;width:290px;height:28px;line-height:28px;white-space:nowrap;overflow:hidden;color:#0f7aea">成都杜甫草堂临时展厅独立展柜报警设备安装项目</div>
<div class="abs" style="left:382.6px;top:522px;width:120px;height:28px;line-height:28px;text-align:right;color:#0f7aea;transform:scale(0.985,1.08);transform-origin:119.5px 50%">3563.00</div>
<div class="abs" style="left:512.6px;top:522px;width:120px;height:28px;line-height:28px;text-align:right;color:#222;transform:scale(0.985,1.08);transform-origin:119.5px 50%">0.00</div>
<div class="abs" style="left:642.6px;top:522px;width:120px;height:28px;line-height:28px;text-align:right;color:#222;transform:scale(0.985,1.08);transform-origin:119.5px 50%">38,900.00</div>
<div class="abs" style="left:772.6px;top:522px;width:120px;height:28px;line-height:28px;text-align:right;color:#0f7aea;transform:scale(0.985,1.08);transform-origin:119.5px 50%">0.00</div>
<div class="abs" style="left:902.6px;top:522px;width:120px;height:28px;line-height:28px;text-align:right;color:#0f7aea;transform:scale(0.985,1.08);transform-origin:119.5px 50%">7080.54</div>
<div class="abs" style="left:0;top:579px;width:1040px;height:1px;background:#e3e3e3"></div>
<div class="abs" style="left:11px;top:558px;width:14px;height:14px;border:1.5px solid #3f94dc;border-radius:2.5px"></div>
<div class="abs" style="left:35.6px;top:551px;width:48px;height:28px;line-height:28px;text-align:center;color:#222;transform:scaleY(1.08)">19</div>
<div class="abs" style="left:94px;top:550.4px;width:290px;height:28px;line-height:28px;white-space:nowrap;overflow:hidden;color:#0f7aea">天津市应急管理局项目</div>
<div class="abs" style="left:382.6px;top:551px;width:120px;height:28px;line-height:28px;text-align:right;color:#0f7aea;transform:scale(0.985,1.08);transform-origin:119.5px 50%">36778.00</div>
<div class="abs" style="left:512.6px;top:551px;width:120px;height:28px;line-height:28px;text-align:right;color:#222;transform:scale(0.985,1.08);transform-origin:119.5px 50%">0.00</div>
<div class="abs" style="left:642.6px;top:551px;width:120px;height:28px;line-height:28px;text-align:right;color:#222;transform:scale(0.985,1.08);transform-origin:119.5px 50%">0.00</div>
<div class="abs" style="left:772.6px;top:551px;width:120px;height:28px;line-height:28px;text-align:right;color:#0f7aea;transform:scale(0.985,1.08);transform-origin:119.5px 50%">190000.00</div>
<div class="abs" style="left:902.6px;top:551px;width:120px;height:28px;line-height:28px;text-align:right;color:#0f7aea;transform:scale(0.985,1.08);transform-origin:119.5px 50%">13065.65</div>
<div class="abs" style="left:0;top:580px;width:1040px;height:28px;background:rgba(60,40,40,0.012)"></div>
<div class="abs" style="left:0;top:608px;width:1040px;height:1px;background:#e3e3e3"></div>
<div class="abs" style="left:11px;top:587px;width:14px;height:14px;border:1.5px solid #3f94dc;border-radius:2.5px"></div>
<div class="abs" style="left:35.6px;top:580px;width:48px;height:28px;line-height:28px;text-align:center;color:#222;transform:scaleY(1.08)">20</div>
<div class="abs" style="left:94px;top:579.4px;width:290px;height:28px;line-height:28px;white-space:nowrap;overflow:hidden;color:#0f7aea">甘肃省工商银行网络保养项目</div>
<div class="abs" style="left:382.6px;top:580px;width:120px;height:28px;line-height:28px;text-align:right;color:#0f7aea;transform:scale(0.985,1.08);transform-origin:119.5px 50%">0.00</div>
<div class="abs" style="left:512.6px;top:580px;width:120px;height:28px;line-height:28px;text-align:right;color:#222;transform:scale(0.985,1.08);transform-origin:119.5px 50%">0.00</div>
<div class="abs" style="left:642.6px;top:580px;width:120px;height:28px;line-height:28px;text-align:right;color:#222;transform:scale(0.985,1.08);transform-origin:119.5px 50%">0.00</div>
<div class="abs" style="left:772.6px;top:580px;width:120px;height:28px;line-height:28px;text-align:right;color:#0f7aea;transform:scale(0.985,1.08);transform-origin:119.5px 50%">0.00</div>
<div class="abs" style="left:902.6px;top:580px;width:120px;height:28px;line-height:28px;text-align:right;color:#0f7aea;transform:scale(0.985,1.08);transform-origin:119.5px 50%">11202.71</div>
<div class="abs" style="left:35px;top:29px;width:1px;height:600px;background:#e3e3e3"></div>
<div class="abs" style="left:83px;top:29px;width:1px;height:600px;background:#e3e3e3"></div>
<div class="abs" style="left:383px;top:29px;width:1px;height:600px;background:#e3e3e3"></div>
<div class="abs" style="left:513px;top:29px;width:1px;height:600px;background:#e3e3e3"></div>
<div class="abs" style="left:643px;top:29px;width:1px;height:600px;background:#e3e3e3"></div>
<div class="abs" style="left:773px;top:29px;width:1px;height:600px;background:#e3e3e3"></div>
<div class="abs" style="left:903px;top:29px;width:1px;height:600px;background:#e3e3e3"></div>
</div>
</body></html>
